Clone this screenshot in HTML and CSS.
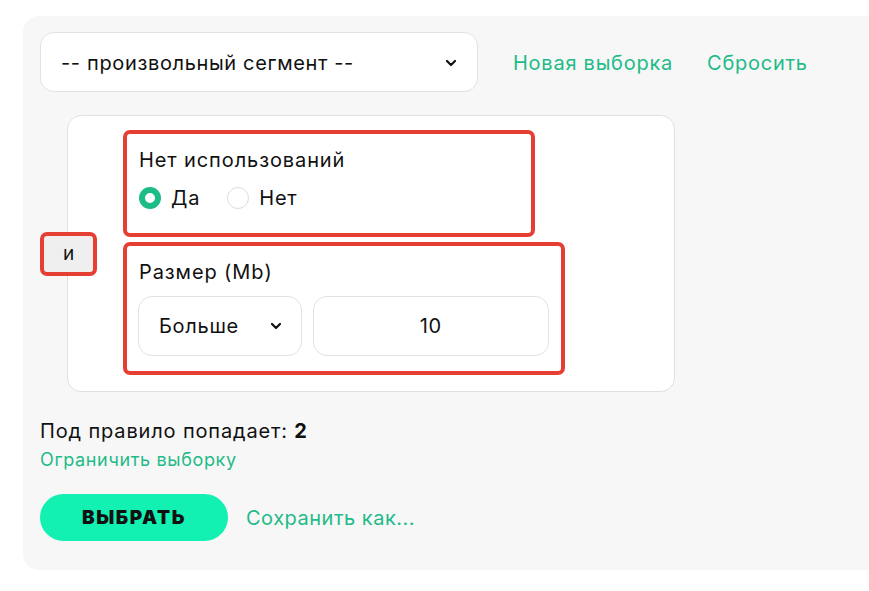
FILE: index.html
```html
<!DOCTYPE html>
<html lang="ru">
<head>
<meta charset="utf-8">
<title>Сегмент</title>
<link rel="stylesheet" href="styles.css">
</head>
<body>
<div class="panel">
  <div class="top-row">
    <div class="select select-main">
      <span>-- произвольный сегмент --</span>
      <svg class="chev" width="12" height="8" viewBox="0 0 12 8"><path d="M2 2l4 4 4-4" fill="none" stroke="#111" stroke-width="2.2" stroke-linecap="round" stroke-linejoin="round"/></svg>
    </div>
    <a class="link">Новая выборка</a>
    <a class="link">Сбросить</a>
  </div>

  <div class="rule-row">
    <div class="and">и</div>
    <div class="card">
      <div class="cond cond-1">
        <div class="cond-title">Нет использований</div>
        <div class="radios">
          <label class="radio"><span class="dot on"></span>Да</label>
          <label class="radio"><span class="dot"></span>Нет</label>
        </div>
      </div>
      <div class="cond cond-2">
        <div class="cond-title">Размер (Mb)</div>
        <div class="fields">
          <div class="select select-op">
            <span>Больше</span>
            <svg class="chev" width="12" height="8" viewBox="0 0 12 8"><path d="M2 2l4 4 4-4" fill="none" stroke="#111" stroke-width="2.2" stroke-linecap="round" stroke-linejoin="round"/></svg>
          </div>
          <div class="input">10</div>
        </div>
      </div>
    </div>
  </div>

  <div class="count">Под правило попадает: <b>2</b></div>
  <a class="link small">Ограничить выборку</a>

  <div class="actions">
    <button class="btn">ВЫБРАТЬ</button>
    <a class="link save">Сохранить как...</a>
  </div>
</div>
</body>
</html>
```

FILE: styles.css
```css
* { box-sizing: border-box; }
body {
  margin: 0;
  background: #fff;
  font-family: Inter, "Noto Sans", sans-serif;
  color: #111;
}
.panel {
  margin: 16px 0 0 23px;
  height: 554px;
  background: #f7f7f7;
  border-radius: 16px 0 0 16px;
  padding: 16px 17px;
}
.top-row {
  display: flex;
  align-items: center;
  height: 60px;
}
.select {
  display: flex;
  align-items: center;
  justify-content: space-between;
  background: #fff;
  border: 1px solid #e2e2e2;
  border-radius: 14px;
  font-size: 20px;
  letter-spacing: 0.65px;
}
.select-main {
  width: 438px;
  height: 60px;
  padding: 2px 20px 0 20px;
  margin-right: 35px;
}
.link {
  color: #1fbb88;
  font-size: 20px;
  letter-spacing: 0.75px;
  cursor: pointer;
}
.top-row .link { padding-top: 2px; }
.top-row .link + .link { margin-left: 34px; }
.rule-row {
  display: flex;
  align-items: center;
  margin-top: 23px;
}
.and {
  position: relative;
  z-index: 1;
  width: 57px;
  height: 44px;
  margin-right: -30px;
  background: #efefef;
  border: 4px solid #e53e33;
  border-radius: 7px;
  display: flex;
  align-items: center;
  justify-content: center;
  font-size: 19px;
}
.card {
  width: 608px;
  height: 277px;
  background: #fff;
  border: 1px solid #e0e0e0;
  border-radius: 14px;
  padding: 14px 0 0 55px;
  display: flex;
  flex-direction: column;
  gap: 5px;
}
.cond {
  border: 4px solid #e53e33;
  border-radius: 7px;
  padding: 12px 12px 0 12px;
}
.cond-1 { width: 412px; height: 107px; }
.cond-2 { width: 442px; height: 133px; }
.cond-title {
  font-size: 20px;
  letter-spacing: 0.9px;
  line-height: 24px;
  margin-top: 2px;
}
.radios {
  display: flex;
  gap: 27px;
  margin-top: 14px;
}
.radio {
  display: flex;
  align-items: center;
  gap: 10px;
  font-size: 20px;
  letter-spacing: 0.8px;
}
.dot {
  width: 22px;
  height: 22px;
  border-radius: 50%;
  border: 1px solid #dcdcdc;
  background: #fff;
}
.dot.on {
  border: 6px solid #1dbc87;
}
.fields {
  display: flex;
  gap: 11px;
  margin-top: 12px;
  margin-left: -1px;
}
.select-op {
  width: 164px;
  height: 60px;
  padding: 0 19px 0 20px;
  font-size: 20px;
  letter-spacing: 0.7px;
}
.input {
  width: 237px;
  height: 60px;
  background: #fff;
  border: 1px solid #e2e2e2;
  border-radius: 14px;
  display: flex;
  align-items: center;
  justify-content: center;
  font-size: 20px;
  letter-spacing: 0.7px;
}
.count {
  margin-top: 27px;
  font-size: 20px;
  letter-spacing: 0.85px;
  line-height: 24px;
}
.count b { font-weight: 700; }
.link.small {
  display: block;
  font-size: 18px;
  letter-spacing: 0.65px;
  margin-top: 6px;
}
.actions {
  display: flex;
  align-items: center;
  gap: 18px;
  margin-top: 24px;
}
.btn {
  width: 188px;
  height: 47px;
  border: none;
  border-radius: 24px;
  background: #12f0b2;
  font-family: inherit;
  font-size: 19px;
  font-weight: 900;
  letter-spacing: 1.6px;
  color: #111;
}
.link.save { letter-spacing: 0.5px; }
```
